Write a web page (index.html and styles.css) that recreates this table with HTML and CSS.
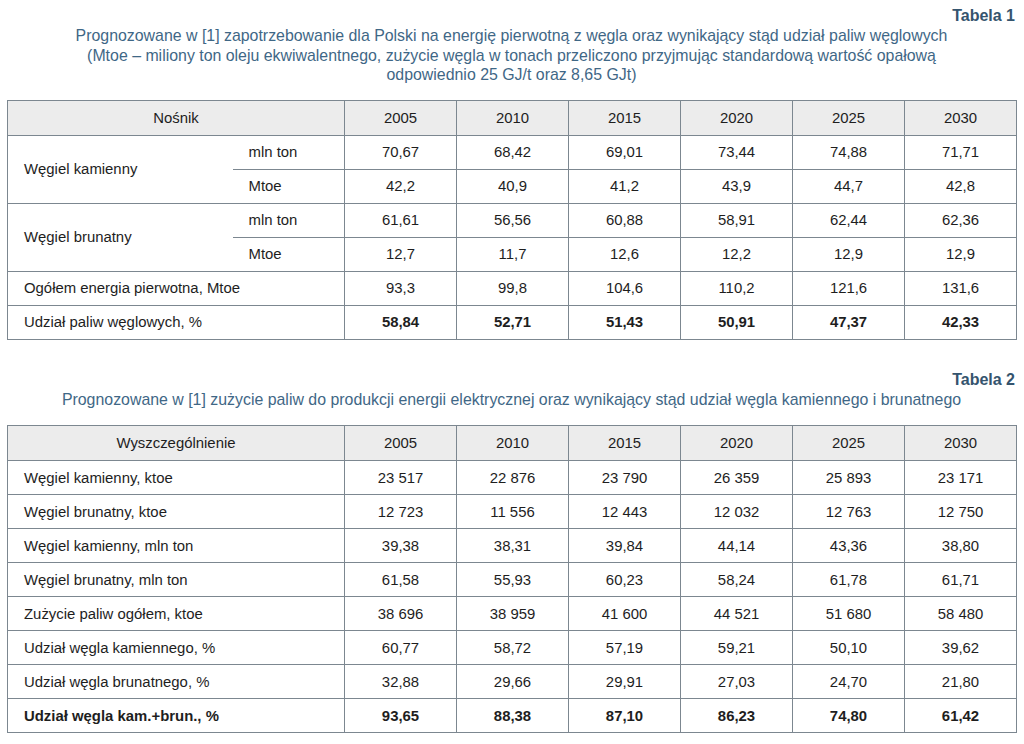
FILE: index.html
```html
<!DOCTYPE html>
<html lang="pl">
<head>
<meta charset="utf-8">
<title>Tabele</title>
<link rel="stylesheet" href="styles.css">
</head>
<body>
<section class="block block-1">
  <div class="label">Tabela 1</div>
  <p class="title">Prognozowane w [1] zapotrzebowanie dla Polski na energię pierwotną z węgla oraz wynikający stąd udział paliw węglowych<br>(Mtoe – miliony ton oleju ekwiwalentnego, zużycie węgla w tonach przeliczono przyjmując standardową wartość opałową<br>odpowiednio 25 GJ/t oraz 8,65 GJt)</p>
  <table class="tbl">
    <colgroup><col class="c-a"><col class="c-b"><col class="c-y"><col class="c-y"><col class="c-y"><col class="c-y"><col class="c-y"><col class="c-y"></colgroup>
    <thead>
      <tr class="head"><th colspan="2">Nośnik</th><th>2005</th><th>2010</th><th>2015</th><th>2020</th><th>2025</th><th>2030</th></tr>
    </thead>
    <tbody>
      <tr><td rowspan="2" class="name">Węgiel kamienny</td><td class="unit">mln ton</td><td>70,67</td><td>68,42</td><td>69,01</td><td>73,44</td><td>74,88</td><td>71,71</td></tr>
      <tr><td class="unit">Mtoe</td><td>42,2</td><td>40,9</td><td>41,2</td><td>43,9</td><td>44,7</td><td>42,8</td></tr>
      <tr><td rowspan="2" class="name">Węgiel brunatny</td><td class="unit">mln ton</td><td>61,61</td><td>56,56</td><td>60,88</td><td>58,91</td><td>62,44</td><td>62,36</td></tr>
      <tr><td class="unit">Mtoe</td><td>12,7</td><td>11,7</td><td>12,6</td><td>12,2</td><td>12,9</td><td>12,9</td></tr>
      <tr><td colspan="2" class="name">Ogółem energia pierwotna, Mtoe</td><td>93,3</td><td>99,8</td><td>104,6</td><td>110,2</td><td>121,6</td><td>131,6</td></tr>
      <tr class="bold-nums"><td colspan="2" class="name plain">Udział paliw węglowych, %</td><td>58,84</td><td>52,71</td><td>51,43</td><td>50,91</td><td>47,37</td><td>42,33</td></tr>
    </tbody>
  </table>
</section>

<section class="block block-2">
  <div class="label">Tabela 2</div>
  <p class="title">Prognozowane w [1] zużycie paliw do produkcji energii elektrycznej oraz wynikający stąd udział węgla kamiennego i brunatnego</p>
  <table class="tbl">
    <colgroup><col class="c-ab"><col class="c-y"><col class="c-y"><col class="c-y"><col class="c-y"><col class="c-y"><col class="c-y"></colgroup>
    <thead>
      <tr class="head"><th>Wyszczególnienie</th><th>2005</th><th>2010</th><th>2015</th><th>2020</th><th>2025</th><th>2030</th></tr>
    </thead>
    <tbody>
      <tr><td class="name">Węgiel kamienny, ktoe</td><td>23 517</td><td>22 876</td><td>23 790</td><td>26 359</td><td>25 893</td><td>23 171</td></tr>
      <tr><td class="name">Węgiel brunatny, ktoe</td><td>12 723</td><td>11 556</td><td>12 443</td><td>12 032</td><td>12 763</td><td>12 750</td></tr>
      <tr><td class="name">Węgiel kamienny, mln ton</td><td>39,38</td><td>38,31</td><td>39,84</td><td>44,14</td><td>43,36</td><td>38,80</td></tr>
      <tr><td class="name">Węgiel brunatny, mln ton</td><td>61,58</td><td>55,93</td><td>60,23</td><td>58,24</td><td>61,78</td><td>61,71</td></tr>
      <tr><td class="name">Zużycie paliw ogółem, ktoe</td><td>38 696</td><td>38 959</td><td>41 600</td><td>44 521</td><td>51 680</td><td>58 480</td></tr>
      <tr><td class="name">Udział węgla kamiennego, %</td><td>60,77</td><td>58,72</td><td>57,19</td><td>59,21</td><td>50,10</td><td>39,62</td></tr>
      <tr><td class="name">Udział węgla brunatnego, %</td><td>32,88</td><td>29,66</td><td>29,91</td><td>27,03</td><td>24,70</td><td>21,80</td></tr>
      <tr class="bold-nums bold-all"><td class="name">Udział węgla kam.+brun., %</td><td>93,65</td><td>88,38</td><td>87,10</td><td>86,23</td><td>74,80</td><td>61,42</td></tr>
    </tbody>
  </table>
</section>
</body>
</html>
```

FILE: styles.css
```css
html, body {
  margin: 0;
  padding: 0;
  background: #ffffff;
}

body {
  width: 1024px;
  font-family: "Liberation Sans", Arial, Helvetica, sans-serif;
  color: #222222;
}

.block {
  padding: 0 8px 0 7px;
}

.block-1 {
  padding-top: 6px;
}

.block-2 {
  padding-top: 30px;
}

.label {
  text-align: right;
  font-weight: bold;
  font-size: 16px;
  line-height: 19px;
  color: #35546e;
  padding-right: 1px;
}

.title {
  margin: 1px 0 0 0;
  text-align: center;
  font-size: 15.9px;
  line-height: 19.5px;
  color: #3f6786;
}

.block-1 .title {
  margin-bottom: 15px;
}

.block-2 .title {
  margin-bottom: 16px;
}

.tbl {
  width: 1009px;
  border-collapse: collapse;
  table-layout: fixed;
  font-size: 14.9px;
  color: #1e1e1e;
  border: 1px solid #6e7880;
}

.c-a { width: 225px; }
.c-b { width: 112px; }
.c-ab { width: 337px; }
.c-y { width: 112px; }

.tbl th,
.tbl td {
  border: 1px solid #7c8790;
  padding: 0;
  height: 33px;
  text-align: center;
  vertical-align: middle;
  font-weight: normal;
}

.tbl thead th {
  background: #ececec;
  height: 34px;
}

.tbl td.name {
  text-align: left;
  padding-left: 16px;
}

.tbl td.unit {
  text-align: left;
  padding-left: 16px;
}

.tbl td[rowspan] {
  border-right: none;
}

.tbl td.unit {
  border-left: none;
}

.bold-nums td {
  font-weight: bold;
}

.bold-nums td.plain {
  font-weight: normal;
}
```
